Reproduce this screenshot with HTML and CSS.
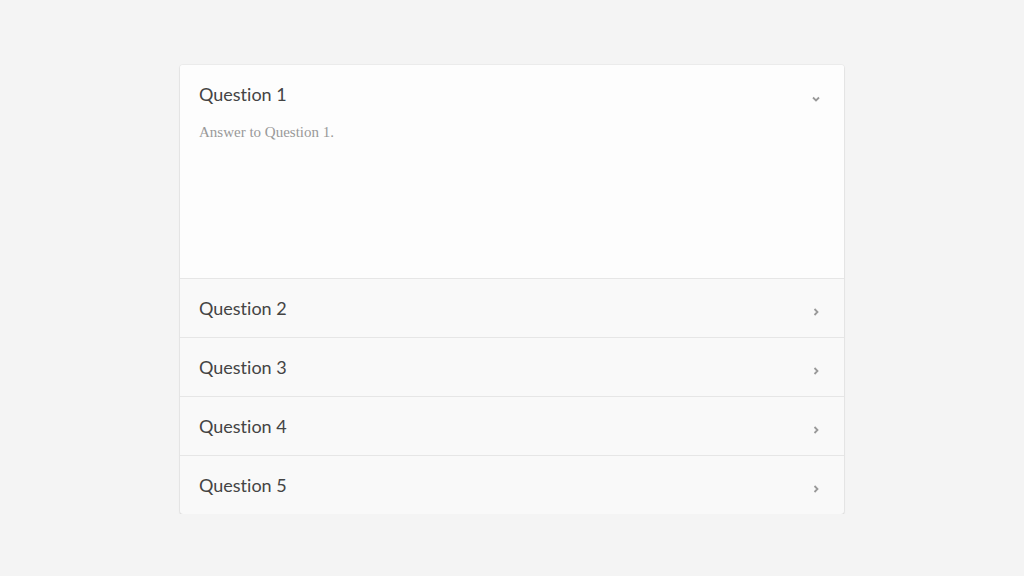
FILE: index.html
```html
<!DOCTYPE html>
<html>
<head>
<meta charset="utf-8">
<link rel="stylesheet" href="styles.css">
</head>
<body>
<div class="page">
  <div class="accordion">
    <div class="item open">
      <div class="head">
        <span class="title">Question 1</span>
        <svg class="chev down" width="10" height="10" viewBox="0 0 10 10"><path d="M2 3.5 L5 6.5 L8 3.5" fill="none" stroke="#999" stroke-width="1.8"/></svg>
      </div>
      <div class="body">Answer to Question 1.</div>
    </div>
    <div class="item">
      <div class="head">
        <span class="title">Question 2</span>
        <svg class="chev" width="10" height="10" viewBox="0 0 10 10"><path d="M3.5 2 L6.5 5 L3.5 8" fill="none" stroke="#999" stroke-width="1.8"/></svg>
      </div>
    </div>
    <div class="item">
      <div class="head">
        <span class="title">Question 3</span>
        <svg class="chev" width="10" height="10" viewBox="0 0 10 10"><path d="M3.5 2 L6.5 5 L3.5 8" fill="none" stroke="#999" stroke-width="1.8"/></svg>
      </div>
    </div>
    <div class="item">
      <div class="head">
        <span class="title">Question 4</span>
        <svg class="chev" width="10" height="10" viewBox="0 0 10 10"><path d="M3.5 2 L6.5 5 L3.5 8" fill="none" stroke="#999" stroke-width="1.8"/></svg>
      </div>
    </div>
    <div class="item">
      <div class="head">
        <span class="title">Question 5</span>
        <svg class="chev" width="10" height="10" viewBox="0 0 10 10"><path d="M3.5 2 L6.5 5 L3.5 8" fill="none" stroke="#999" stroke-width="1.8"/></svg>
      </div>
    </div>
  </div>
</div>
</body>
</html>
```
FILE: styles.css
```css
html, body {
  margin: 0;
  padding: 0;
  background: #f4f4f4;
}
.page {
  display: flex;
  justify-content: center;
  padding-top: 65px;
}
.accordion {
  width: 664px;
  background: #f9f9f9;
  border-radius: 3px;
  box-shadow: 0 0 0 1px rgba(0,0,0,0.03), 0 1px 2px rgba(0,0,0,0.12);
  overflow: hidden;
}
.item {
  border-top: 1px solid #e6e6e6;
}
.item:first-child {
  border-top: none;
}
.item.open {
  background: #fdfdfd;
  height: 213px;
}
.head {
  height: 58px;
  display: flex;
  align-items: center;
  justify-content: space-between;
  padding: 0 23px 0 19px;
}
.title {
  font-family: Lato, "Liberation Sans", sans-serif;
  font-size: 18px;
  color: #444;
  font-variant-ligatures: none;
}
.chev {
  margin-top: 8px;
}
.chev.down {
  margin-top: 10px;
}
.body {
  padding: 0 19px;
  margin-top: 1px;
  font-family: "Liberation Serif", serif;
  font-size: 15px;
  color: #999;
}
```
